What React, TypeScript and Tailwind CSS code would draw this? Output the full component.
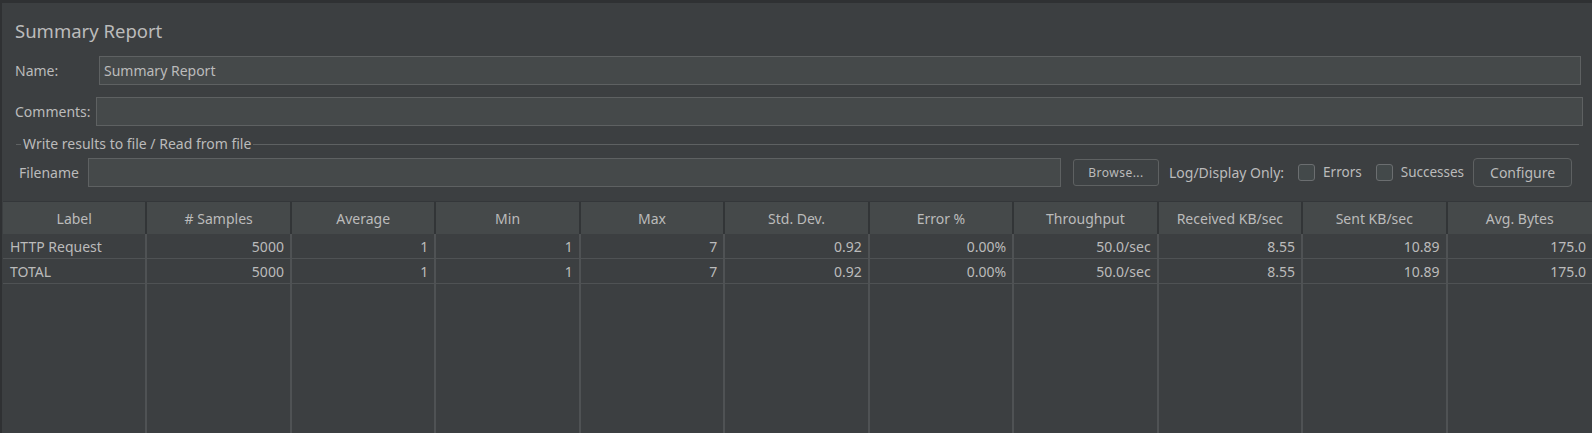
import React from "react";

const columns = [
  "Label",
  "# Samples",
  "Average",
  "Min",
  "Max",
  "Std. Dev.",
  "Error %",
  "Throughput",
  "Received KB/sec",
  "Sent KB/sec",
  "Avg. Bytes",
];

const rows = [
  ["HTTP Request", "5000", "1", "1", "7", "0.92", "0.00%", "50.0/sec", "8.55", "10.89", "175.0"],
  ["TOTAL", "5000", "1", "1", "7", "0.92", "0.00%", "50.0/sec", "8.55", "10.89", "175.0"],
];

const Checkbox = ({ label }: { label: string }) => (
  <div className="flex items-center">
    <span className="w-[17px] h-[17px] rounded-[3px] border border-[#6b6e70] bg-[#43494a]" />
    <span className="ml-[8px] text-[13.5px]">{label}</span>
  </div>
);

const App = () => {
  return (
    <div
      className="w-[1592px] h-[433px] bg-[#3c3f41] text-[#bbbbbb] text-[14px] flex flex-col overflow-hidden"
      style={{ fontFamily: '"Noto Sans", "Open Sans", sans-serif' }}
    >
      <div className="h-[3px] bg-[#2f3133]" />
      <div className="flex flex-1 min-h-0">
        <div className="w-[2px] bg-[#2f3133]" />
        <div className="flex-1 flex flex-col min-w-0 pl-[1px]">
          {/* header form */}
          <div className="pl-[12px]">
            <div className="text-[18.5px] leading-[26px] mt-[15px]">Summary Report</div>

            <div className="flex items-center mt-[12px] h-[29px]">
              <span className="w-[84px]">Name:</span>
              <div className="flex-1 h-full mr-[11px] bg-[#45494a] border border-[#5e6162] flex items-center px-[4px]">
                Summary Report
              </div>
            </div>

            <div className="flex items-center mt-[12px] h-[29px]">
              <span className="w-[81px]">Comments:</span>
              <div className="flex-1 h-full mr-[9px] bg-[#45494a] border border-[#5e6162]" />
            </div>

            {/* titled border */}
            <div className="flex items-center mt-[11px] h-[14px]">
              <div className="w-[5px] h-px bg-[#5e6162] ml-[1px]" />
              <span className="px-[2px] leading-[14px]">Write results to file / Read from file</span>
              <div className="flex-1 h-px bg-[#5e6162] mr-[13px]" />
            </div>

            <div className="flex items-center mt-[7px] h-[29px] pl-[4px]">
              <span className="w-[69px]">Filename</span>
              <div className="w-[973px] h-full bg-[#45494a] border border-[#5e6162]" />
              <button className="ml-[12px] w-[86px] h-[27px] rounded-[3px] border border-[#5e6162] bg-[#3e4244] text-[12px] tracking-[0.5px] text-[#bbbbbb]">
                Browse...
              </button>
              <span className="ml-[10px]">Log/Display Only:</span>
              <div className="ml-[14px]">
                <Checkbox label="Errors" />
              </div>
              <div className="ml-[14px]">
                <Checkbox label="Successes" />
              </div>
              <button className="ml-[9px] w-[99px] h-[29px] rounded-[4px] border border-[#5e6162] bg-[#3e4244] text-[14px] text-[#bbbbbb]">
                Configure
              </button>
            </div>
          </div>

          {/* table */}
          <div className="mt-[14px] flex-1 flex flex-col min-h-0">
            <div className="grid grid-cols-11 h-[33px] bg-[#45494a] border-t border-[#34373a]">
              {columns.map((c, i) => (
                <div
                  key={c}
                  className={`flex items-center justify-center ${
                    i < columns.length - 1 ? "border-r-2 border-[#323537]" : ""
                  }`}
                >
                  {c}
                </div>
              ))}
            </div>
            {rows.map((r, ri) => (
              <div key={ri} className="grid grid-cols-11 h-[25px] border-b border-[#4f5254]">
                {r.map((v, i) => (
                  <div
                    key={i}
                    className={`flex items-center ${
                      i === 0 ? "justify-start pl-[7px]" : "justify-end pr-[6px]"
                    } ${i < r.length - 1 ? "border-r-2 border-[#4f5254]" : ""}`}
                  >
                    {v}
                  </div>
                ))}
              </div>
            ))}
            <div className="grid grid-cols-11 flex-1">
              {columns.map((c, i) => (
                <div
                  key={c}
                  className={i < columns.length - 1 ? "border-r-2 border-[#4f5254]" : ""}
                />
              ))}
            </div>
          </div>
        </div>
      </div>
    </div>
  );
};

export default App;
